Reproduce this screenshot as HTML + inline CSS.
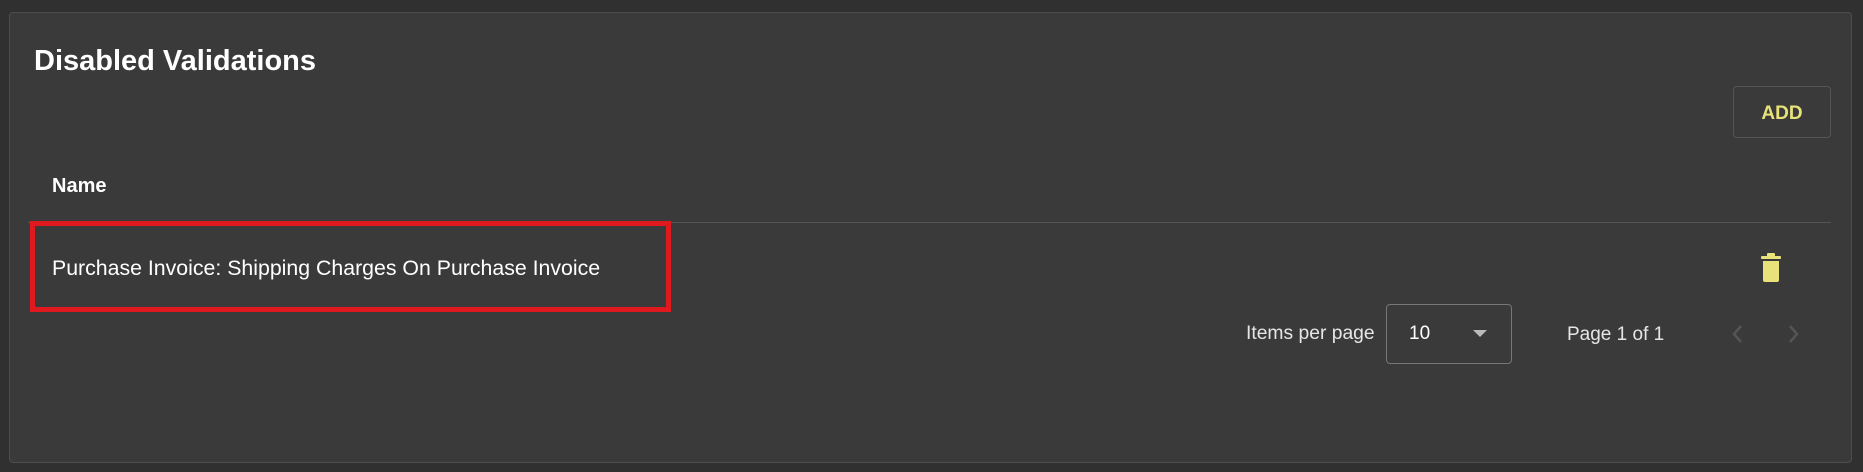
<!DOCTYPE html>
<html><head><meta charset="utf-8"><style>
html,body{margin:0;padding:0;width:1863px;height:472px;background:#303030;overflow:hidden;font-family:"Liberation Sans",sans-serif;color:#fff}
.card{position:absolute;left:9px;top:12px;width:1843px;height:451px;background:#3a3a3a;border:1px solid #4d4d4d;border-radius:4px;box-sizing:border-box}
.abs{position:absolute;white-space:nowrap}
</style></head><body>
<div class="card"></div>
<div class="abs" style="left:34px;top:44px;font-size:29px;font-weight:bold;line-height:34px">Disabled Validations</div>
<div class="abs" style="left:1733px;top:86px;width:98px;height:52px;border:1px solid #555;border-radius:4px;box-sizing:border-box;color:#e8e27a;font-weight:bold;font-size:19px;line-height:53px;text-align:center">ADD</div>
<div class="abs" style="left:52px;top:174px;font-size:20px;font-weight:bold;line-height:24px">Name</div>
<div class="abs" style="left:28px;top:222px;width:1803px;height:1px;background:#555"></div>
<div class="abs" style="left:30px;top:221px;width:641px;height:91px;border:5px solid #e0191e;box-sizing:border-box"></div>
<div class="abs" style="left:52px;top:255px;font-size:21.3px;line-height:26px">Purchase Invoice: Shipping Charges On Purchase Invoice</div>
<svg class="abs" style="left:1759px;top:252px" width="24" height="32" viewBox="0 0 24 32"><rect x="2" y="4" width="20" height="3" rx="1" fill="#e8e27a"/><rect x="8" y="1" width="8" height="4" rx="1" fill="#e8e27a"/><path d="M4 9h16v19a2 2 0 0 1-2 2H6a2 2 0 0 1-2-2z" fill="#e8e27a"/></svg>
<div class="abs" style="left:1246px;top:322px;font-size:19.3px;line-height:24px;color:#e6e6e6">Items per page</div>
<div class="abs" style="left:1386px;top:304px;width:126px;height:60px;border:1px solid #777;border-radius:4px;box-sizing:border-box"></div>
<div class="abs" style="left:1409px;top:322px;font-size:19px;line-height:24px">10</div>
<svg class="abs" style="left:1473px;top:330px" width="14" height="8"><path d="M0 0h14L7 7z" fill="#bbb"/></svg>
<div class="abs" style="left:1567px;top:323px;font-size:19px;line-height:24px;color:#e6e6e6">Page 1 of 1</div>
<svg class="abs" style="left:1731px;top:323px" width="14" height="22"><path d="M10 3L3 11l7 8" stroke="#555" stroke-width="2.5" fill="none"/></svg>
<svg class="abs" style="left:1786px;top:323px" width="14" height="22"><path d="M4 3l7 8-7 8" stroke="#555" stroke-width="2.5" fill="none"/></svg>
</body></html>
